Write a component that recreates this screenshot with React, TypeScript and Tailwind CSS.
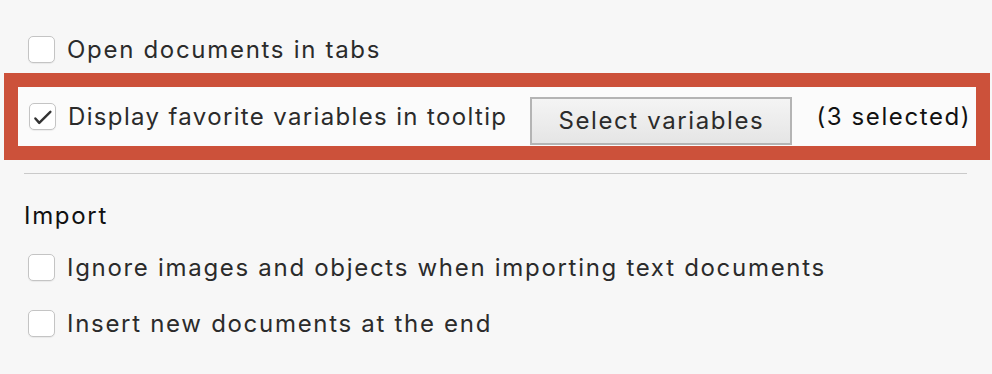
function Checkbox({ checked = false }: { checked?: boolean }) {
  return (
    <div className="w-[27px] h-[27px] shrink-0 rounded-[5px] border border-[#c4c4c4] bg-white shadow-[0_1px_1px_rgba(0,0,0,0.06)] flex items-center justify-center">
      {checked && (
        <svg width="27" height="27" viewBox="0 0 27 27" className="block">
          <path d="M5.8 15.6 L10 20.4 L22 8.4" fill="none" stroke="#333" strokeWidth="2.6" strokeLinecap="round" strokeLinejoin="round" />
        </svg>
      )}
    </div>
  );
}

function Row({ label, checked = false }: { label: string; checked?: boolean }) {
  return (
    <div className="flex items-center h-[27px] pl-[28px] gap-[12px]">
      <Checkbox checked={checked} />
      <span className="text-[#2b2b2b] whitespace-nowrap leading-[28px]">{label}</span>
    </div>
  );
}

export default function App() {
  return (
    <div
      className="bg-[#f7f7f7] w-[992px] h-[374px] text-[24px] tracking-[1.7px] overflow-hidden"
      style={{ fontFamily: 'Inter, "Noto Sans", sans-serif' }}
    >
      <div className="pt-[36px]">
        <Row label="Open documents in tabs" />
      </div>
      <div className="mt-[10px] ml-[4px] w-[986px] h-[87px] border-[14px] border-[#cc513a] bg-[#fbfbfb] flex items-center pl-[11px]">
        <Checkbox checked />
        <span className="ml-[12px] text-[#2b2b2b] whitespace-nowrap leading-[28px] tracking-[1.35px]">Display favorite variables in tooltip</span>
        <button className="ml-[23px] mt-[9px] w-[262px] h-[48px] border-2 border-[#b4b4b4] bg-gradient-to-b from-[#f4f4f4] to-[#e5e5e5] text-[#2b2b2b] leading-[28px] tracking-[1.6px] flex items-center justify-center">
          Select variables
        </button>
        <span className="ml-[24px] text-[#111] whitespace-nowrap leading-[28px] tracking-[1.6px]">(3 selected)</span>
      </div>
      <div className="mt-[13px] ml-[24px] w-[943px] h-px bg-[#cacaca]" />
      <div className="mt-[28px] ml-[24px] text-[#111] leading-[28px]">Import</div>
      <div className="mt-[24px]">
        <Row label="Ignore images and objects when importing text documents" />
      </div>
      <div className="mt-[29px]">
        <Row label="Insert new documents at the end" />
      </div>
    </div>
  );
}
